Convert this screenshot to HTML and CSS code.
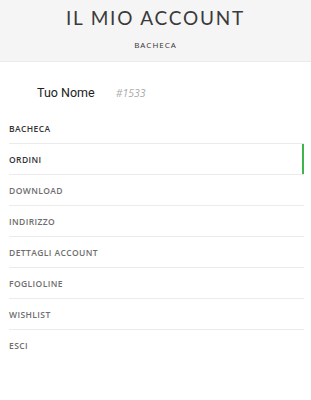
FILE: index.html
```html
<!DOCTYPE html>
<html lang="it">
<head>
    <meta charset="utf-8">
    <title>Il mio account</title>
    <link rel="stylesheet" href="styles.css">
</head>
<body>
<div class="header">
    <h1>IL MIO ACCOUNT</h1>
    <div class="crumb">BACHECA</div>
</div>

<div class="profile">
    <span class="name">Tuo Nome</span>
    <span class="userId">#1533</span>
</div>

<ul class="menu">
    <li class="dark"><a href="#">BACHECA</a></li>
    <li class="dark active"><a href="#">ORDINI</a></li>
    <li><a href="#">DOWNLOAD</a></li>
    <li><a href="#">INDIRIZZO</a></li>
    <li><a href="#">DETTAGLI ACCOUNT</a></li>
    <li><a href="#">FOGLIOLINE</a></li>
    <li><a href="#">WISHLIST</a></li>
    <li><a href="#">ESCI</a></li>
</ul>
</body>
</html>
```

FILE: styles.css
```css
body {
    margin: 0;
    padding: 0;
    font-family: "Open Sans", Arial, sans-serif;
    background: #ffffff;
}

.header {
    display: flex;
    flex-direction: column;
    align-items: center;
    background-color: #f5f5f5;
    border-bottom: 1px solid #ebebeb;
    height: 62px;
    box-sizing: border-box;
    padding-top: 7px;
}

h1 {
    margin: 0;
    font-family: Lato, Arial, sans-serif;
    font-weight: 400;
    font-size: 19px;
    line-height: 22px;
    letter-spacing: 1.8px;
    color: #3a3a3a;
}

.crumb {
    margin-top: 10px;
    font-size: 8px;
    letter-spacing: 1px;
    color: #333333;
}

.profile {
    display: flex;
    align-items: baseline;
    gap: 21px;
    padding: 23px 0 0 37px;
    height: 51px;
    box-sizing: border-box;
}

.name {
    font-family: Roboto, Arial, sans-serif;
    font-size: 12.5px;
    color: #222222;
}

.userId {
    font-size: 10.5px;
    font-style: italic;
    color: #aaaaaa;
}

.menu {
    list-style: none;
    margin: 0 7px 0 9px;
    padding: 0;
}

.menu li {
    position: relative;
    height: 30px;
    display: flex;
    align-items: center;
    border-bottom: 1px solid #ebebeb;
}

.menu li:last-child {
    border-bottom: none;
}

.menu a {
    text-decoration: none;
    font-size: 8.5px;
    font-weight: 600;
    letter-spacing: 0.4px;
    color: #6e6e6e;
}

.menu li.dark a {
    color: #333333;
}

.menu li.active::after {
    content: "";
    position: absolute;
    right: 0;
    top: 0;
    bottom: 0;
    width: 2px;
    background: #3cb64a;
}
```
